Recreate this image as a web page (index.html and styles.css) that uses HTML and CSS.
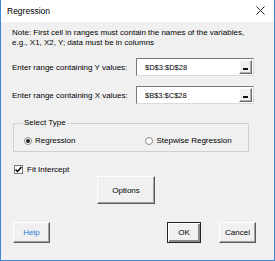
FILE: index.html
```html
<!DOCTYPE html>
<html lang="en">
<head>
    <meta charset="UTF-8">
    <title>Regression</title>
    <link rel="stylesheet" href="styles.css">
</head>
<body>
    <div class="dialog">
        <div class="titlebar">
            <span class="title">Regression</span>
            <svg class="close" width="9" height="9" viewBox="0 0 9 9">
                <path d="M0.5 0.5 L8.5 8.5 M8.5 0.5 L0.5 8.5" stroke="#222" stroke-width="1" fill="none"/>
            </svg>
        </div>

        <div class="content">
            <p class="note">Note: First cell in ranges must contain the names of the variables,<br>e.g., X1, X2, Y; data must be in columns</p>

            <div class="range-row">
                <label>Enter range containing Y values:</label>
                <div class="range-input">
                    <span class="range-value">$D$3:$D$28</span>
                    <span class="pick"></span>
                </div>
            </div>

            <div class="range-row">
                <label>Enter range containing X values:</label>
                <div class="range-input">
                    <span class="range-value">$B$3:$C$28</span>
                    <span class="pick"></span>
                </div>
            </div>

            <fieldset class="type-group">
                <legend>Select Type</legend>
                <label class="radio"><span class="radio-mark checked"></span>Regression</label>
                <label class="radio stepwise"><span class="radio-mark"></span>Stepwise Regression</label>
            </fieldset>

            <label class="check">
                <span class="check-box">
                    <svg width="9" height="9" viewBox="0 0 9 9">
                        <path d="M1.5 4.5 L3.5 6.5 L7.5 2" stroke="#111" stroke-width="1.6" fill="none"/>
                    </svg>
                </span>
                Fit Intercept
            </label>

            <button class="btn options">Options</button>

            <div class="footer">
                <button class="btn help">Help</button>
                <div class="footer-right">
                    <button class="btn default">OK</button>
                    <button class="btn cancel">Cancel</button>
                </div>
            </div>
        </div>
    </div>
</body>
</html>
```

FILE: styles.css
```css
* {
    box-sizing: border-box;
}
body {
    margin: 0;
    font-family: "Liberation Sans", Arial, sans-serif;
    font-size: 8px;
    color: #000;
}
.dialog {
    width: 275px;
    height: 261px;
    background-color: #f0f0f0;
    border: 1px solid #3d89d6;
    border-top: none;
}
.titlebar {
    height: 22px;
    background-color: #fff;
    display: flex;
    align-items: center;
    justify-content: space-between;
    padding: 0 9px 1px 6px;
}
.title {
    font-size: 8.5px;
}
.content {
    padding: 6px 18px 0 11px;
}
.note {
    margin: 0;
    line-height: 10px;
}
.range-row {
    display: flex;
    align-items: center;
    height: 18px;
    margin-top: 10px;
}
.range-row label {
    width: 124px;
}
.range-input {
    width: 118px;
    height: 18px;
    background-color: #fff;
    border: 1px solid;
    border-color: #7a7a7a #dadada #dadada #7a7a7a;
    display: flex;
    align-items: center;
    justify-content: space-between;
    padding: 0 1px 0 8px;
}
.range-value {
    font-size: 7.5px;
}
.pick {
    width: 13px;
    height: 14px;
    background-color: #f0f0f0;
    border: 1px solid;
    border-color: #fff #696969 #696969 #fff;
    box-shadow: inset -1px -1px #b0b0b0;
    display: flex;
    align-items: flex-end;
    justify-content: center;
    padding-bottom: 3px;
}
.pick::after {
    content: "";
    width: 5px;
    height: 2px;
    background-color: #111;
}
.type-group {
    margin: 14px 0 0 1px;
    width: 236px;
    height: 34px;
    border: 1px solid #d0d0d0;
    padding: 2px 0 0 10px;
    display: flex;
    align-items: center;
}
.type-group legend {
    padding: 0 1px;
    margin-left: -1px;
    line-height: 10px;
}
.radio {
    display: flex;
    align-items: center;
    gap: 3px;
}
.stepwise {
    margin-left: 70px;
}
.radio-mark {
    width: 8px;
    height: 8px;
    border-radius: 50%;
    border: 1px solid #8a8a8a;
    background-color: #fff;
    display: flex;
    align-items: center;
    justify-content: center;
}
.radio-mark.checked::after {
    content: "";
    width: 4px;
    height: 4px;
    border-radius: 50%;
    background-color: #222;
}
.check {
    display: flex;
    align-items: center;
    gap: 4px;
    margin: 13px 0 0 2px;
}
.check-box {
    width: 9px;
    height: 9px;
    background-color: #fff;
    border: 1px solid #7a7a7a;
    display: flex;
}
.check-box svg {
    margin: -1px;
}
.btn {
    font-family: "Liberation Sans", Arial, sans-serif;
    font-size: 8px;
    color: #000;
    background-color: #f0f0f0;
    border: 1px solid;
    border-color: #fff #5c5c5c #5c5c5c #fff;
    box-shadow: inset -1px -1px #a0a0a0;
    padding: 0;
}
.options {
    display: block;
    width: 58px;
    height: 28px;
    margin: 2px 0 0 85px;
}
.footer {
    display: flex;
    justify-content: space-between;
    margin-top: 18px;
}
.footer-right {
    display: flex;
    gap: 18px;
}
.help {
    width: 37px;
    height: 21px;
    margin-left: 1px;
    color: #2f7fd6;
}
.default {
    width: 34px;
    height: 21px;
    border: 1px solid #222;
    box-shadow: inset 1px 1px #fff, inset -2px -2px #8a8a8a;
}
.cancel {
    width: 37px;
    height: 21px;
}
```
